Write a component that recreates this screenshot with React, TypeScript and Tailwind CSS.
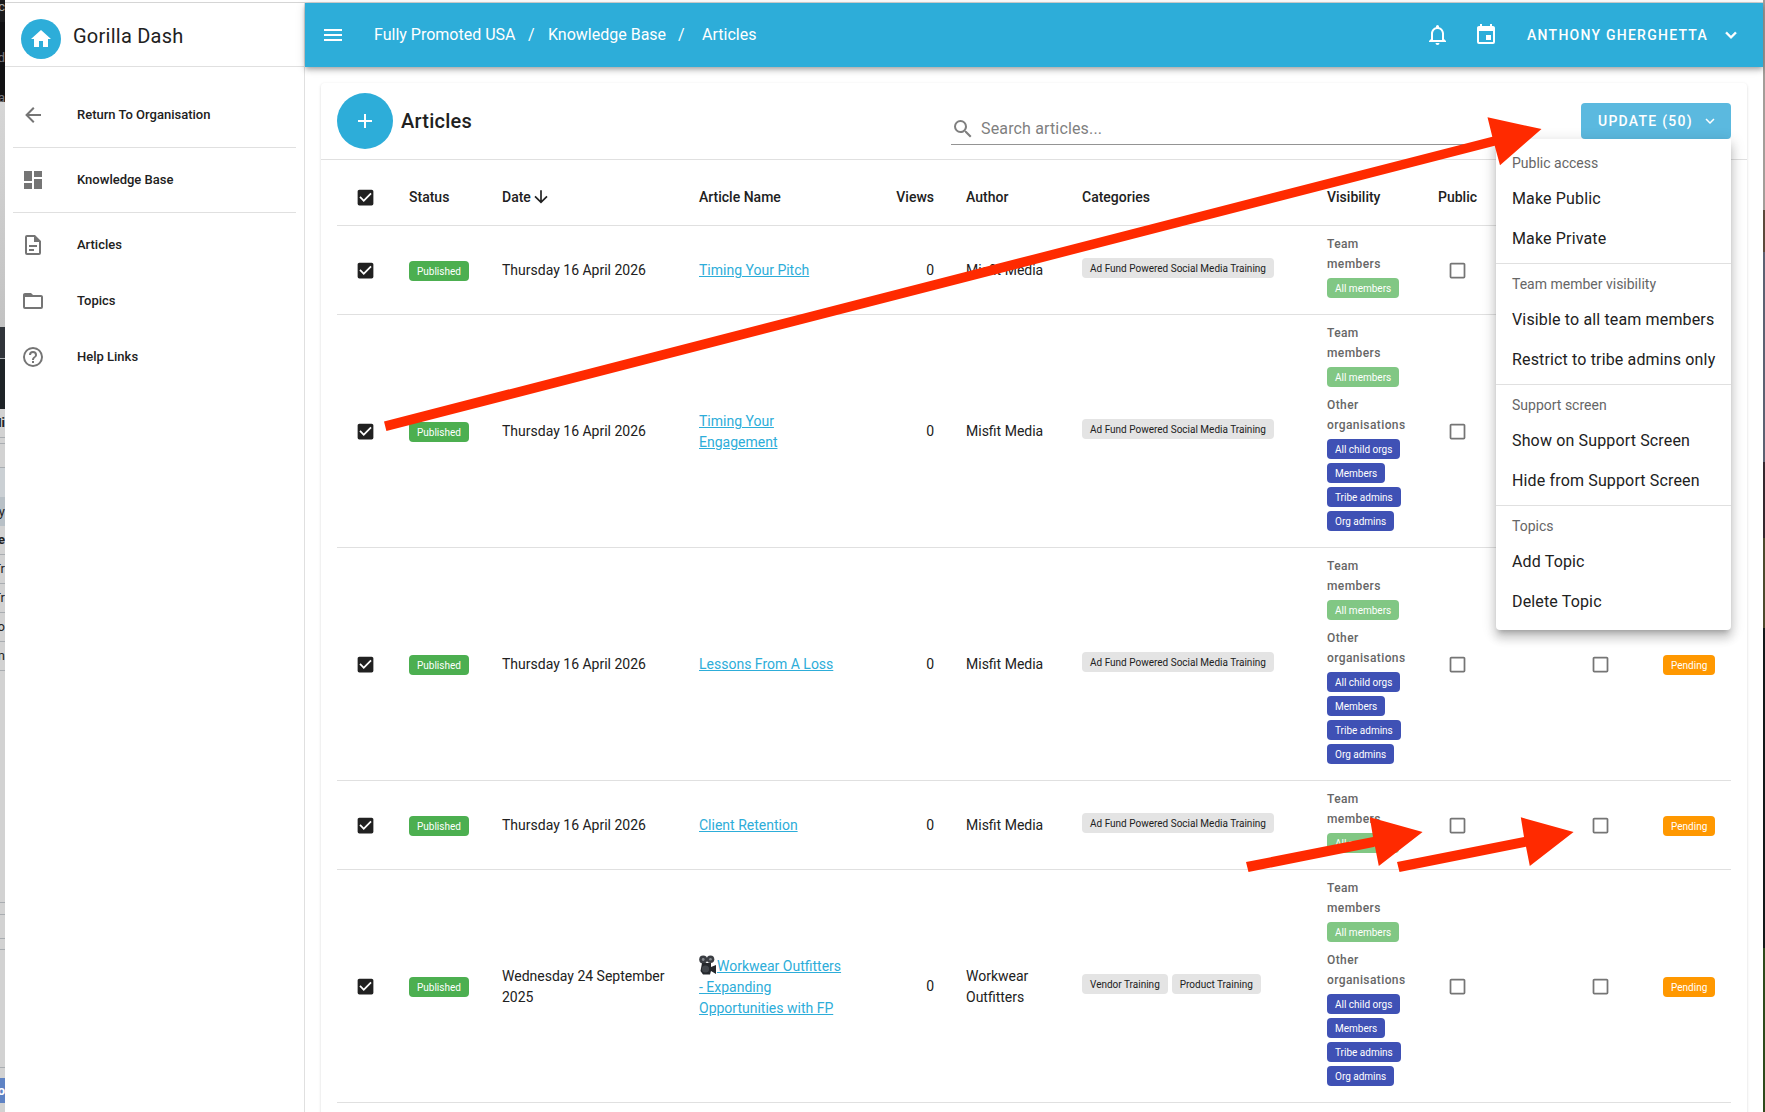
import type { ReactNode } from "react"

type IconProps = { path: string; className?: string }

type Article = {
  id: number
  date: string
  name: string
  camera?: boolean
  author: string
  categories: string[]
  otherOrgs: boolean
}

const icons = {
  home: "M10,20V14H14V20H19V12H22L12,3L2,12H5V20H10Z",
  menu: "M3,6H21V8H3V6M3,11H21V13H3V11M3,16H21V18H3V16Z",
  back: "M20,11V13H8L13.5,18.5L12.08,19.92L4.16,12L12.08,4.08L13.5,5.5L8,11H20Z",
  down: "M11,4H13V16L18.5,10.5L19.92,11.92L12,19.84L4.08,11.92L5.5,10.5L11,16V4Z",
  dashboard: "M13,3V9H21V3M13,21H21V11H13M3,21H11V15H3M3,13H11V3H3V13Z",
  file: "M6,2A2,2 0 0,0 4,4V20A2,2 0 0,0 6,22H18A2,2 0 0,0 20,20V8L14,2H6M6,4H13V9H18V20H6V4M8,12V14H16V12H8M8,16V18H13V16H8Z",
  folder: "M20,18H4V8H20M20,6H12L10,4H4C2.89,4 2,4.89 2,6V18A2,2 0 0,0 4,20H20A2,2 0 0,0 22,18V8C22,6.89 21.1,6 20,6Z",
  help: "M11,18H13V16H11V18M12,2A10,10 0 0,0 2,12A10,10 0 0,0 12,22A10,10 0 0,0 22,12A10,10 0 0,0 12,2M12,20C7.59,20 4,16.41 4,12C4,7.59 7.59,4 12,4C16.41,4 20,7.59 20,12C20,16.41 16.41,20 12,20M12,6A4,4 0 0,0 8,10H10A2,2 0 0,1 12,8A2,2 0 0,1 14,10C14,12 11,11.75 11,15H13C13,12.75 16,12.5 16,10A4,4 0 0,0 12,6Z",
  bell: "M16,17H7V10.5C7,8 9,6 11.5,6C14,6 16,8 16,10.5M18,16V10.5C18,7.43 15.86,4.86 13,4.18V3.5A1.5,1.5 0 0,0 11.5,2A1.5,1.5 0 0,0 10,3.5V4.18C7.13,4.86 5,7.43 5,10.5V16L3,18V19H20V18M11.5,22A2,2 0 0,0 13.5,20H9.5A2,2 0 0,0 11.5,22Z",
  calendar: "M19,19H5V8H19M16,1V3H8V1H6V3H5C3.89,3 3,3.89 3,5V19A2,2 0 0,0 5,21H19A2,2 0 0,0 21,19V5C21,3.89 20.1,3 19,3H18V1M17,12H12V17H17V12Z",
  chevron: "M7.41,8.58L12,13.17L16.59,8.58L18,10L12,16L6,10L7.41,8.58Z",
  plus: "M19,13H13V19H11V13H5V11H11V5H13V11H19V13Z",
  search: "M9.5,3A6.5,6.5 0 0,1 16,9.5C16,11.11 15.41,12.59 14.44,13.73L14.71,14H15.5L20.5,19L19,20.5L14,15.5V14.71L13.73,14.44C12.59,15.41 11.11,16 9.5,16A6.5,6.5 0 0,1 3,9.5A6.5,6.5 0 0,1 9.5,3M9.5,5C7,5 5,7 5,9.5C5,12 7,14 9.5,14C12,14 14,12 14,9.5C14,7 12,5 9.5,5Z",
  checked: "M10,17L5,12L6.41,10.58L10,14.17L17.59,6.58L19,8M19,3H5C3.89,3 3,3.89 3,5V19A2,2 0 0,0 5,21H19A2,2 0 0,0 21,19V5C21,3.89 20.1,3 19,3Z",
  unchecked: "M19,3H5C3.89,3 3,3.89 3,5V19A2,2 0 0,0 5,21H19A2,2 0 0,0 21,19V5C21,3.89 20.1,3 19,3M19,5V19H5V5H19Z",
}

const articles: Article[] = [
  { id: 1, date: "Thursday 16 April 2026", name: "Timing Your Pitch", author: "Misfit Media", categories: ["Ad Fund Powered Social Media Training"], otherOrgs: false },
  { id: 2, date: "Thursday 16 April 2026", name: "Timing Your Engagement", author: "Misfit Media", categories: ["Ad Fund Powered Social Media Training"], otherOrgs: true },
  { id: 3, date: "Thursday 16 April 2026", name: "Lessons From A Loss", author: "Misfit Media", categories: ["Ad Fund Powered Social Media Training"], otherOrgs: true },
  { id: 4, date: "Thursday 16 April 2026", name: "Client Retention", author: "Misfit Media", categories: ["Ad Fund Powered Social Media Training"], otherOrgs: false },
  { id: 5, date: "Wednesday 24 September 2025", name: "Workwear Outfitters - Expanding Opportunities with FP", camera: true, author: "Workwear Outfitters", categories: ["Vendor Training", "Product Training"], otherOrgs: true },
]

const menuGroups = [
  { title: "Public access", items: ["Make Public", "Make Private"] },
  { title: "Team member visibility", items: ["Visible to all team members", "Restrict to tribe admins only"] },
  { title: "Support screen", items: ["Show on Support Screen", "Hide from Support Screen"] },
  { title: "Topics", items: ["Add Topic", "Delete Topic"] },
]

const columns = "grid grid-cols-[72px_93px_197px_172px_63px_32px_116px_245px_93px_74px_212px_25px] items-center"

function Icon({ path, className = "size-6" }: IconProps) {
  return (
    <svg viewBox="0 0 24 24" className={`shrink-0 ${className}`} fill="currentColor">
      <path d={path} />
    </svg>
  )
}

function Chip({ color, children }: { color: string; children: ReactNode }) {
  return (
    <span className={`flex h-5 w-fit items-center rounded px-2 text-[10px] whitespace-nowrap ${color}`}>{children}</span>
  )
}

// Sliver of the window that lies behind the app on the left
function BackgroundWindow() {
  return (
    <div className="flex w-[5px] shrink-0 flex-col overflow-hidden bg-[#d2d2d2] text-[13px] text-[#222222] *:flex *:shrink-0 *:items-center *:justify-end *:overflow-hidden *:border-[#a9adb1]">
      <div className="h-[22px] bg-[#1b1b1d] pb-2 text-[#aaaaaa]">c</div>
      <div className="h-[72px] bg-[#111113] text-[#77777d]">d</div>
      <div className="h-2 bg-[#111113] text-[#77777d]">a</div>
      <div className="h-[225px] bg-linear-to-b from-[#d6d6d6] to-[#c2c2c2]" />
      <div className="h-8 border-b border-black bg-[#30343a]" />
      <div className="h-[50px] bg-[#1e2327]" />
      <div className="h-[29px] border-b font-bold">Hi</div>
      <div className="h-1.5 border-b" />
      <div className="h-6 border-b border-[#7f858b]" />
      <div className="h-[29px] bg-[#cbd0d4]" />
      <div className="h-[29px] bg-[#b8c0c6]">y</div>
      <div className="h-[29px] border-b font-bold">e</div>
      <div className="h-[29px] border-b">Tr</div>
      <div className="h-[29px] border-b">Tr</div>
      <div className="h-[29px] border-b">fo</div>
      <div className="h-[29px] border-b">n</div>
      <div className="h-[232px] border-b" />
      <div className="h-3 border-b border-[#7f858b]" />
      <div className="h-6 border-b border-[#7f858b]" />
      <div className="h-[11px] border-b border-[#7f858b]" />
      <div className="h-[118px] border-b border-[#7f858b]" />
      <div className="h-2.5" />
      <div className="h-[25px] bg-[#5f83c4] font-bold text-white">o</div>
    </div>
  )
}

function NavItem({ icon, label }: { icon: string; label: string }) {
  return (
    <a className="flex h-14 items-center pl-2">
      <Icon path={icon} className="size-6 text-[#757575]" />
      <span className="ml-8 text-[13px] font-medium">{label}</span>
    </a>
  )
}

function Sidebar() {
  return (
    <aside className="w-[300px] shrink-0 border-r border-[#e0e0e0] bg-white">
      <div className="flex h-16 items-center border-b border-[#e0e0e0] pl-4">
        <div className="mt-2 flex size-10 items-center justify-center rounded-full bg-[#2dadd9] text-white">
          <Icon path={icons.home} />
        </div>
        <span className="mt-[3px] ml-3 text-xl tracking-[0.0125em]">Gorilla Dash</span>
      </div>
      <nav className="px-2 pt-5">
        <NavItem icon={icons.back} label="Return To Organisation" />
        <div className="my-1 h-px w-[283px] bg-[#e0e0e0]" />
        <NavItem icon={icons.dashboard} label="Knowledge Base" />
        <div className="my-1 h-px w-[283px] bg-[#e0e0e0]" />
        <NavItem icon={icons.file} label="Articles" />
        <NavItem icon={icons.folder} label="Topics" />
        <NavItem icon={icons.help} label="Help Links" />
      </nav>
    </aside>
  )
}

function TopBar() {
  return (
    <header className="relative z-10 flex h-16 items-center bg-[#2dadd9] pl-4 text-white shadow-[0_2px_4px_-1px_rgba(0,0,0,0.2),0_4px_5px_rgba(0,0,0,0.14),0_1px_10px_rgba(0,0,0,0.12)]">
      <Icon path={icons.menu} />
      <div className="ml-[29px] flex text-base">
        <span className="w-[154px]">Fully Promoted USA</span>
        <span className="w-5">/</span>
        <span className="w-[130px]">Knowledge Base</span>
        <span className="w-6">/</span>
        <span>Articles</span>
      </div>
      <div className="mr-[21px] ml-auto flex items-center">
        <Icon path={icons.bell} />
        <Icon path={icons.calendar} className="ml-6 size-6" />
        <span className="ml-[29px] text-sm font-medium tracking-[1.25px]">ANTHONY GHERGHETTA</span>
        <Icon path={icons.chevron} className="ml-3 size-[22px] stroke-current stroke-[0.5]" />
      </div>
    </header>
  )
}

function UpdateMenu() {
  return (
    <div className="absolute top-9 right-0 z-20 w-[235px] rounded-b bg-white py-2 shadow-[0_5px_5px_-3px_rgba(0,0,0,0.2),0_8px_10px_1px_rgba(0,0,0,0.14),0_3px_14px_2px_rgba(0,0,0,0.12)]">
      {menuGroups.map((group, index) => (
        <div key={group.title}>
          {index > 0 && <div className="my-1 h-px bg-[#e0e0e0]" />}
          <div className="flex h-8 items-center px-4 text-sm text-[#666666]">{group.title}</div>
          {group.items.map((item) => (
            <div key={item} className="flex h-10 items-center px-4 text-base tracking-[0.15px] whitespace-nowrap">
              {item}
            </div>
          ))}
        </div>
      ))}
    </div>
  )
}

// Film camera that sits in front of video article names
function CameraIcon() {
  return (
    <svg viewBox="0 0 18 20" className="inline h-5 w-[18px] align-[-4px]">
      <circle cx="4.2" cy="4.5" r="4" fill="#3a3d42" />
      <circle cx="11.5" cy="4.2" r="3.8" fill="#3a3d42" />
      <circle cx="4.2" cy="4.5" r="1.4" fill="#85898e" />
      <circle cx="11.5" cy="4.2" r="1.3" fill="#85898e" />
      <path d="M3 8h9v4l5-2v9l-5-3l-1 3.500H4L1.500 16z" fill="#25282c" />
      <circle cx="6.500" cy="14" r="3.600" fill="#43474c" />
    </svg>
  )
}

function ArticleRow({ article }: { article: Article }) {
  return (
    <div className={`${columns} border-b border-[#e0e0e0] text-sm leading-[21px]`}>
      <Icon path={icons.checked} className="ml-[18px] size-[21px]" />
      <div className="pt-0.5">
        <Chip color="bg-[#4caf50] text-white">Published</Chip>
      </div>
      <div className="pt-px pr-6">{article.date}</div>
      <a className="pt-px pr-6 text-[#2dadd9] underline">
        {article.camera && <CameraIcon />}
        {article.name}
      </a>
      <div className="pt-px text-right">0</div>
      <div />
      <div className="pt-px pr-8">{article.author}</div>
      <div className="flex gap-1 pb-1">
        {article.categories.map((category) => (
          <Chip key={category} color="bg-[#e4e4e4]">
            {category}
          </Chip>
        ))}
      </div>
      <div className="py-2 text-xs leading-5 font-medium tracking-[0.4px] text-[#666666]">
        <div className="mb-2">
          <div>Team<br />members</div>
          <div className="mt-1 font-normal tracking-normal">
            <Chip color="bg-[#81c784] pt-px text-white">All members</Chip>
          </div>
        </div>
        {article.otherOrgs && (
          <div className="mb-2">
            <div>Other<br />organisations</div>
            <div className="mt-1 flex flex-col gap-1 font-normal tracking-normal">
              {["All child orgs", "Members", "Tribe admins", "Org admins"].map((org) => (
                <Chip key={org} color="bg-[#3f51b5] pt-px text-white">
                  {org}
                </Chip>
              ))}
            </div>
          </div>
        )}
      </div>
      <div className="pl-[27px] text-[#757575]">
        <Icon path={icons.unchecked} className="size-[21px]" />
      </div>
      <div className="flex items-center pl-24">
        <Icon path={icons.unchecked} className="size-[21px] text-[#757575]" />
        <div className="ml-[52px] pt-0.5">
          <Chip color="bg-[#ff9800] text-white">Pending</Chip>
        </div>
      </div>
    </div>
  )
}

function ArticlesCard() {
  return (
    <section className="mx-4 mt-4 h-[1100px] rounded bg-white shadow-[0_1px_3px_rgba(0,0,0,0.16)]">
      <div className="flex h-[77px] items-center border-b border-[#e0e0e0] px-4">
        <button className="flex size-14 items-center justify-center rounded-full bg-[#2dadd9] text-white">
          <Icon path={icons.plus} className="size-6" />
        </button>
        <h1 className="ml-2 text-xl font-medium tracking-[0.0125em]">Articles</h1>
        <div className="mt-3 ml-auto flex h-9 w-[535px] items-center border-b border-[#949494] pt-1 text-[#7f7f7f]">
          <Icon path={icons.search} className="size-6" />
          <span className="ml-1.5 text-base tracking-[0.15px]">Search articles...</span>
        </div>
        <div className="relative ml-[95px]">
          <button className="flex h-9 w-[150px] items-center rounded bg-[#5bb9df] pl-[17px] text-sm font-medium tracking-[1.25px] text-white">
            UPDATE (50)
            <Icon path={icons.chevron} className="ml-2 size-[18px]" />
          </button>
          <UpdateMenu />
        </div>
      </div>
      <div className="px-4">
        <div className={`${columns} h-[66px] border-b border-[#e0e0e0] pt-[9px] text-sm font-medium`}>
          <Icon path={icons.checked} className="ml-[18px] size-[21px]" />
          <div>Status</div>
          <div className="flex items-center">
            Date
            <Icon path={icons.down} className="size-5" />
          </div>
          <div>Article Name</div>
          <div className="text-right">Views</div>
          <div />
          <div>Author</div>
          <div>Categories</div>
          <div>Visibility</div>
          <div className="pl-[18px]">Public</div>
        </div>
        {articles.map((article) => (
          <ArticleRow key={article.id} article={article} />
        ))}
      </div>
    </section>
  )
}

function Arrows() {
  return (
    <svg viewBox="0 0 1765 1112" className="pointer-events-none absolute inset-0 z-30 h-full w-full" fill="#ff2a00">
      <path d="M384 421.500L1492.300 136.700L1487.500 117.300L1541.500 129L1500 165.300L1494.700 145.700L386.400 431Z" />
      <path d="M1246 862L1373 837L1369.800 817.300L1422.600 832L1378.800 866L1375 846.700L1248.500 872Z" />
      <path d="M1397 862L1524 837L1520.800 817.300L1573.600 832L1529.800 866L1526 846.700L1399.500 872Z" />
    </svg>
  )
}

export default function App() {
  return (
    <div className="relative flex h-[1112px] w-[1765px] overflow-hidden bg-white font-[Roboto,sans-serif] text-[#212121]">
      <BackgroundWindow />
      <div className="flex min-w-0 flex-1 flex-col">
        <div className="h-[3px] shrink-0 border-b border-[#d5d5d5]" />
        <div className="flex min-h-0 flex-1">
          <Sidebar />
          <main className="min-w-0 flex-1">
            <TopBar />
            <ArticlesCard />
          </main>
        </div>
      </div>
      <div className="flex w-0.5 shrink-0 flex-col">
        <div className="h-[210px] bg-[#a39d99]" />
        <div className="h-[42px] bg-[#5c4a3c]" />
        <div className="h-[210px] bg-[#5d6172]" />
        <div className="h-[76px] bg-[#35282f]" />
        <div className="h-[90px] bg-[#4d4a2e]" />
        <div className="h-[320px] bg-[#14191a]" />
        <div className="flex-1 bg-[#2f4a1c]" />
      </div>
      <Arrows />
    </div>
  )
}
